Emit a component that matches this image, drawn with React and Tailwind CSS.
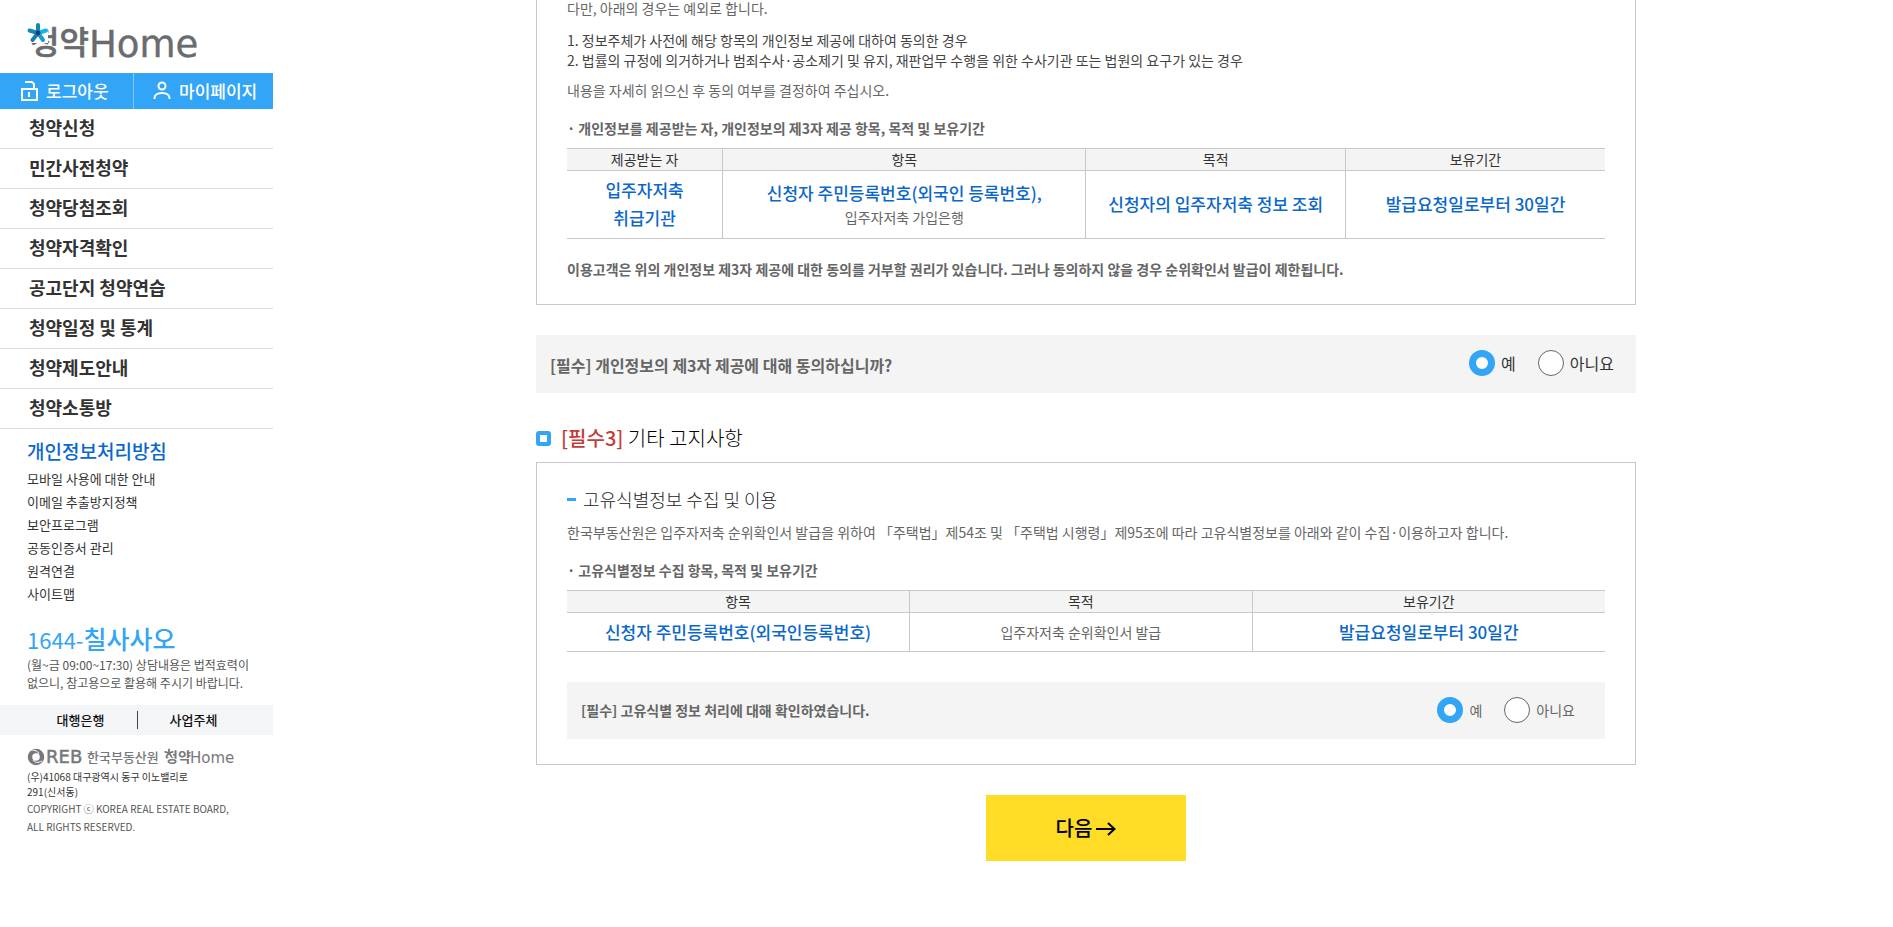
import { useState } from "react";

const menuItems = [
  "청약신청",
  "민간사전청약",
  "청약당첨조회",
  "청약자격확인",
  "공고단지 청약연습",
  "청약일정 및 통계",
  "청약제도안내",
  "청약소통방",
];

const policyLinks = [
  "모바일 사용에 대한 안내",
  "이메일 추출방지정책",
  "보안프로그램",
  "공동인증서 관리",
  "원격연결",
  "사이트맵",
];

function Star({ x, y, size, colors }) {
  return (
    <g transform={`translate(${x} ${y}) scale(${size})`} strokeWidth="4" strokeLinecap="round">
      <line x1="0" y1="0" x2="0" y2="-8" stroke={colors[0]} />
      <line x1="0" y1="0" x2="8" y2="-2.500" stroke={colors[1]} />
      <line x1="0" y1="0" x2="5" y2="7" stroke={colors[2]} />
      <line x1="0" y1="0" x2="-5.500" y2="7" stroke={colors[3]} />
      <line x1="0" y1="0" x2="-8.500" y2="-2.500" stroke={colors[0]} />
      <circle cx="0" cy="0" r="2.400" fill={colors[4]} />
    </g>
  );
}

function Logo() {
  return (
    <svg width="190" height="52" viewBox="0 0 190 52" role="img" aria-label="청약Home">
      <text x="3" y="39" fontSize="32" fontWeight="500" fill="#6a6b6e" stroke="#6a6b6e" strokeWidth="0.6">청약</text>
      <text x="62" y="42" fontSize="37" fill="#6a6b6e" stroke="#6a6b6e" strokeWidth="0.4" fontFamily="DejaVu Sans, sans-serif">Home</text>
      <rect x="0" y="6" width="21" height="22" fill="#fff" />
      <Star x={11} y={18} size={1} colors={["#1686b8", "#12b4ee", "#1c9bd0", "#1b7fae", "#163f78"]} />
    </svg>
  );
}

function SmallLogo() {
  return (
    <svg width="220" height="22" viewBox="0 0 220 22" role="img" aria-label="REB 한국부동산원 청약Home">
      <circle cx="9" cy="11" r="6" fill="none" stroke="#77787b" strokeWidth="4.500" />
      <path d="M4 4c4 0 7 1 8 4M15 15c-4 2-7 2-9-1" fill="none" stroke="#fff" strokeWidth="1" />
      <text x="19" y="17" fontSize="18" fill="#77787b" stroke="#77787b" strokeWidth="0.5" fontFamily="DejaVu Sans, sans-serif">REB</text>
      <text x="60" y="16" fontSize="13" fontWeight="500" fill="#77787b">한국부동산원</text>
      <text x="138" y="16" fontSize="14" fontWeight="700" fill="#77787b">청약</text>
      <text x="163" y="17" fontSize="15" fill="#77787b" fontFamily="DejaVu Sans, sans-serif">Home</text>
      <rect x="136" y="2" width="10" height="9" fill="#fff" />
      <Star x={142} y={7} size={0.45} colors={["#77787b", "#77787b", "#77787b", "#77787b", "#77787b"]} />
    </svg>
  );
}

function LockIcon() {
  return (
    <svg width="18" height="20" viewBox="0 0 18 20" fill="none" stroke="#fff" strokeWidth="2" aria-hidden="true">
      <rect x="2" y="8" width="15" height="11" />
      <path d="M5 1h7l2 2v5M9 11v5" />
    </svg>
  );
}

function PersonIcon() {
  return (
    <svg width="18" height="20" viewBox="0 0 18 20" fill="none" stroke="#fff" strokeWidth="2" aria-hidden="true">
      <circle cx="9" cy="5" r="3.500" />
      <path d="M1.500 18v-1c0-3 3-5 7.500-5s7.500 2 7.500 5v1" />
    </svg>
  );
}

function Sidebar() {
  return (
    <aside className="w-[273px] shrink-0">
      <a href="#home" className="block pl-[27px] pt-[15px] pb-1.5">
        <Logo />
      </a>
      <div className="flex h-9 bg-[#32a5f6] text-white text-[17px] font-medium">
        <button className="w-[134px] pl-5 flex items-center gap-2 border-r border-[#84c9fa]">
          <LockIcon />
          로그아웃
        </button>
        <button className="flex-1 pl-[19px] flex items-center gap-2">
          <PersonIcon />
          마이페이지
        </button>
      </div>
      <nav>
        <ul>
          {menuItems.map((item) => (
            <li key={item} className="border-b border-[#dcdcdc]">
              <a href="#menu" className="block pl-[29px] h-[39px] leading-[37px] text-[18px] font-bold text-[#333]">
                {item}
              </a>
            </li>
          ))}
        </ul>
      </nav>
      <div className="pl-[27px]">
        <a href="#privacy" className="block mt-[9px] text-[19px] leading-[26px] font-medium text-[#0b68cb]">
          개인정보처리방침
        </a>
        <ul className="mt-[3px] text-[13px] leading-[23px] text-[#333]">
          {policyLinks.map((link) => (
            <li key={link}>
              <a href="#policy">{link}</a>
            </li>
          ))}
        </ul>
        <p className="mt-4 leading-[34px] text-[#32a5f6] text-[22px]">
          1644-<strong className="text-[25px] font-medium">칠사사오</strong>
        </p>
        <p className="text-[12px] leading-[18px] text-[#555]">
          (월~금 09:00~17:30) 상담내용은 법적효력이
          <br />
          없으니, 참고용으로 활용해 주시기 바랍니다.
        </p>
      </div>
      <div className="mt-[13px] h-[30px] flex items-center bg-[#f4f5f7] text-[13px] font-medium text-[#111]">
        <a href="#bank" className="w-[137px] pl-6 text-center">대행은행</a>
        <span className="w-px h-[18px] bg-[#444]" />
        <a href="#owner" className="flex-1 pr-6 text-center">사업주체</a>
      </div>
      <footer className="pl-[27px] pt-[11px] text-[10px]">
        <SmallLogo />
        <address className="mt-px not-italic leading-[15px] text-[#333]">
          (우)41068 대구광역시 동구 이노밸리로
          <br />
          291(신서동)
        </address>
        <p className="mt-px leading-[18px] text-[#555]">
          COPYRIGHT ⓒ KOREA REAL ESTATE BOARD,
          <br />
          ALL RIGHTS RESERVED.
        </p>
      </footer>
    </aside>
  );
}

function YesNo({ name, label }) {
  const [value, setValue] = useState("예");
  return (
    <div role="radiogroup" aria-label={label} className="pb-0.5 flex items-center gap-[22px]">
      {["예", "아니요"].map((option) => (
        <label key={option} className="flex items-center gap-1.5">
          <input
            type="radio"
            name={name}
            checked={value === option}
            onChange={() => setValue(option)}
            className="appearance-none size-[26px] rounded-full bg-white border border-[#666] checked:border-[7px] checked:border-[#32a5f6]"
          />
          {option}
        </label>
      ))}
    </div>
  );
}

function InfoTable({ columns, widths, children }) {
  return (
    <table className="mt-2.5 w-full table-fixed border-collapse text-center text-[14px]">
      <colgroup>
        {widths.map((w, i) => (
          <col key={i} className={w} />
        ))}
      </colgroup>
      <thead>
        <tr className="bg-[#f4f4f4] border-y border-[#c8c8c8] text-[#333] divide-x divide-[#c8c8c8]">
          {columns.map((c) => (
            <th key={c} scope="col" className="h-[22px] pb-0.5 leading-[18px] font-normal">{c}</th>
          ))}
        </tr>
      </thead>
      <tbody>
        <tr className="border-b border-[#c8c8c8] divide-x divide-[#c8c8c8]">{children}</tr>
      </tbody>
    </table>
  );
}

function BulletTitle({ children }) {
  return (
    <h4 className="mt-[18px] flex gap-[3px] text-[14px] leading-5 font-bold text-[#666]">
      <span>·</span>
      {children}
    </h4>
  );
}

function App() {
  return (
    <div className="flex bg-white text-[#666] font-['Noto_Sans_CJK_KR','Noto_Sans_CJK_JP',sans-serif]">
      <Sidebar />
      <main className="flex-1 pl-1.5 pb-14">
        <div className="max-w-[1100px] mx-auto">
          <section className="border border-t-0 border-[#c8c8c8] px-[30px] pb-[25px] text-[14px] leading-5">
            <p className="leading-4">다만, 아래의 경우는 예외로 합니다.</p>
            <ol className="mt-3.5 text-[#444]">
              <li>1. 정보주체가 사전에 해당 항목의 개인정보 제공에 대하여 동의한 경우</li>
              <li>2. 법률의 규정에 의거하거나 범죄수사·공소제기 및 유지, 재판업무 수행을 위한 수사기관 또는 법원의 요구가 있는 경우</li>
            </ol>
            <p className="mt-2.5">내용을 자세히 읽으신 후 동의 여부를 결정하여 주십시오.</p>
            <BulletTitle>개인정보를 제공받는 자, 개인정보의 제3자 제공 항목, 목적 및 보유기간</BulletTitle>
            <InfoTable
              columns={["제공받는 자", "항목", "목적", "보유기간"]}
              widths={["w-[15%]", "w-[35%]", "w-[25%]", "w-[25%]"]}
            >
              <td className="h-[68px] pb-0.5 text-[17px] leading-7 font-medium text-[#0b68cb]">
                입주자저축
                <br />
                취급기관
              </td>
              <td>
                <strong className="block text-[17px] leading-6 font-medium text-[#0b68cb]">
                  신청자 주민등록번호(외국인 등록번호),
                </strong>
                <span className="block leading-6">입주자저축 가입은행</span>
              </td>
              <td className="pb-0.5 text-[17px] font-medium text-[#0b68cb]">신청자의 입주자저축 정보 조회</td>
              <td className="pb-0.5 text-[17px] font-medium text-[#0b68cb]">발급요청일로부터 30일간</td>
            </InfoTable>
            <p className="mt-5 font-bold">
              이용고객은 위의 개인정보 제3자 제공에 대한 동의를 거부할 권리가 있습니다. 그러나 동의하지 않을 경우 순위확인서 발급이 제한됩니다.
            </p>
          </section>

          <div className="mt-[30px] h-[58px] pl-3.5 pr-[22px] flex items-center justify-between bg-[#f4f4f4] text-[16px] text-[#333]">
            <p className="pt-0.5 font-bold text-[#666]">[필수] 개인정보의 제3자 제공에 대해 동의하십니까?</p>
            <YesNo name="thirdParty" label="개인정보의 제3자 제공 동의" />
          </div>

          <h2 className="mt-[33px] flex items-center gap-2.5 text-[20px] leading-6 font-light text-black">
            <span className="size-[15px] rounded-[3px] border-4 border-[#32a5f6]" />
            <span>
              <span className="font-medium text-[#c43c3a]">[필수3]</span> 기타 고지사항
            </span>
          </h2>

          <section className="mt-3 border border-[#c8c8c8] px-[30px] pt-6 pb-[25px] text-[14px] leading-5">
            <h3 className="flex items-center gap-[7px] text-[18px] leading-6 font-light text-[#222]">
              <span className="w-[9px] h-[3px] bg-[#32a5f6]" />
              고유식별정보 수집 및 이용
            </h3>
            <p className="mt-[11px]">
              한국부동산원은 입주자저축 순위확인서 발급을 위하여 「주택법」제54조 및 「주택법 시행령」제95조에 따라 고유식별정보를 아래와 같이 수집·이용하고자 합니다.
            </p>
            <BulletTitle>고유식별정보 수집 항목, 목적 및 보유기간</BulletTitle>
            <InfoTable columns={["항목", "목적", "보유기간"]} widths={["w-[33%]", "w-[33%]", "w-[34%]"]}>
              <td className="h-[39px] text-[17px] font-medium text-[#0b68cb]">신청자 주민등록번호(외국인등록번호)</td>
              <td>입주자저축 순위확인서 발급</td>
              <td className="text-[17px] font-medium text-[#0b68cb]">발급요청일로부터 30일간</td>
            </InfoTable>
            <div className="mt-[30px] h-[57px] pl-3.5 pr-[30px] flex items-center justify-between bg-[#f4f4f4]">
              <p className="pb-0.5 font-bold">[필수] 고유식별 정보 처리에 대해 확인하였습니다.</p>
              <YesNo name="uniqueId" label="고유식별 정보 처리 확인" />
            </div>
          </section>

          <button className="mt-[30px] mx-auto w-[200px] h-[66px] flex items-center justify-center gap-1 bg-[#ffdc26] text-[20px] font-medium text-black">
            다음
            <svg width="20" height="16" viewBox="0 0 20 16" fill="none" stroke="currentColor" strokeWidth="2" aria-hidden="true">
              <path d="M0 9h18M12 3l6.500 6-6.500 6" />
            </svg>
          </button>
        </div>
      </main>
    </div>
  );
}

export default App;
